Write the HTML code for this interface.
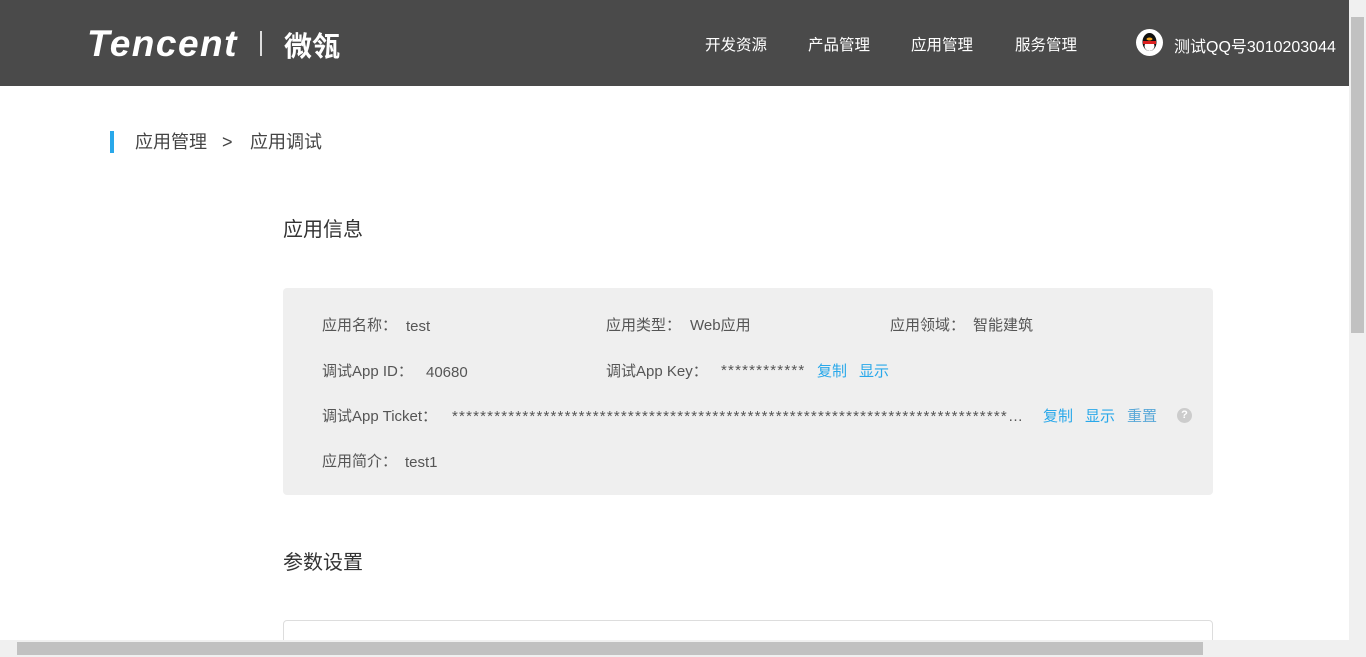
<!DOCTYPE html>
<html><head><meta charset="utf-8"><style>
*{margin:0;padding:0;box-sizing:border-box}
body{width:1366px;height:657px;overflow:hidden;background:#fff;font-family:"Liberation Sans","Noto Sans CJK SC",sans-serif;color:#333;position:relative}
.hd{position:absolute;left:0;top:0;width:1349px;height:86px;background:#4a4a4a;color:#fff}
.logo{position:absolute;left:87px;top:23px;font-size:37px;font-weight:bold;font-style:italic;letter-spacing:1.5px;color:#fff}
.sep{position:absolute;left:260px;top:31px;width:2px;height:25px;background:#ddd}
.wl{position:absolute;left:284px;top:25px;font-size:28px;font-weight:bold;color:#fff}
.nav{position:absolute;top:33px;font-size:15.5px}
.av{position:absolute;left:1136px;top:29px;width:27px;height:27px;border-radius:50%;background:#fff;overflow:hidden}
.user{position:absolute;left:1174px;top:33px;font-size:16px}
.bc{position:absolute;left:110px;top:131px;height:22px;border-left:4px solid #29a8ea;font-size:18px;color:#444;line-height:22px;width:300px}
.bc span{position:absolute;top:0}
.h2{position:absolute;left:283px;font-size:20px;color:#333}
.box{position:absolute;left:283px;top:288px;width:930px;height:207px;background:#efefef;border-radius:4px;font-size:15px;color:#555}
.box span{position:absolute;white-space:nowrap;line-height:22px;height:22px}
.a{color:#29a8ea}
.st{letter-spacing:1.2px}
.box2{position:absolute;left:283px;top:620px;width:930px;height:30px;border:1px solid #ddd;border-radius:4px}
.vs{position:absolute;left:1349px;top:0;width:17px;height:657px;background:#f0f0f0}
.vt{position:absolute;left:1351px;top:17px;width:13px;height:316px;background:#c1c1c1}
.hs{position:absolute;left:0;top:640px;width:1349px;height:17px;background:#f0f0f0}
.ht{position:absolute;left:17px;top:642px;width:1186px;height:13px;background:#c1c1c1}
</style></head><body>
<div class="hd">
<div class="logo">Tencent</div>
<div class="sep"></div>
<div class="wl">微瓴</div>
<div class="nav" style="left:705px">开发资源</div>
<div class="nav" style="left:808px">产品管理</div>
<div class="nav" style="left:911px">应用管理</div>
<div class="nav" style="left:1015px">服务管理</div>
<div class="av"><svg width="27" height="27" viewBox="0 0 27 27"><ellipse cx="13.5" cy="13" rx="7" ry="9" fill="#111"/><ellipse cx="13.5" cy="17" rx="5" ry="5" fill="#fff"/><rect x="7" y="12" width="13" height="3" fill="#d22"/><ellipse cx="13.5" cy="10" rx="3" ry="1.5" fill="#f5a623"/></svg></div>
<div class="user">测试QQ号3010203044</div>
</div>
<div class="bc"><span style="left:21px">应用管理</span><span style="left:108px">&gt;</span><span style="left:136px">应用调试</span></div>
<div class="h2" style="top:213px">应用信息</div>
<div class="box">
<span style="left:39px;top:27px">应用名称：</span><span style="left:123px;top:28px">test</span>
<span style="left:323px;top:27px">应用类型：</span><span style="left:407px;top:27px">Web应用</span>
<span style="left:607px;top:27px">应用领域：</span><span style="left:690px;top:27px">智能建筑</span>
<span style="left:39px;top:73px">调试App ID：</span><span style="left:143px;top:74px">40680</span>
<span style="left:323px;top:73px">调试App Key：</span><span class="st" style="left:438px;top:72px">************</span>
<span class="a" style="left:534px;top:73px">复制</span><span class="a" style="left:576px;top:73px">显示</span>
<span style="left:39px;top:118px">调试App Ticket：</span>
<span class="st" style="left:169px;top:118px;width:574px;overflow:hidden;text-overflow:ellipsis">****************************************************************************************</span>
<span class="a" style="left:760px;top:118px">复制</span>
<span class="a" style="left:802px;top:118px">显示</span>
<span class="a" style="left:844px;top:118px;color:#5aa8d8">重置</span>
<span style="left:894px;top:120px;width:15px;height:15px;border-radius:50%;background:#ccc;color:#fff;font-size:11px;text-align:center;line-height:15px;font-weight:bold">?</span>
<span style="left:39px;top:163px">应用简介：</span><span style="left:122px;top:164px">test1</span>
</div>
<div class="h2" style="top:546px">参数设置</div>
<div class="box2"></div>
<div class="vs"></div><div class="vt"></div>
<div class="hs"></div><div class="ht"></div>
</body></html>
